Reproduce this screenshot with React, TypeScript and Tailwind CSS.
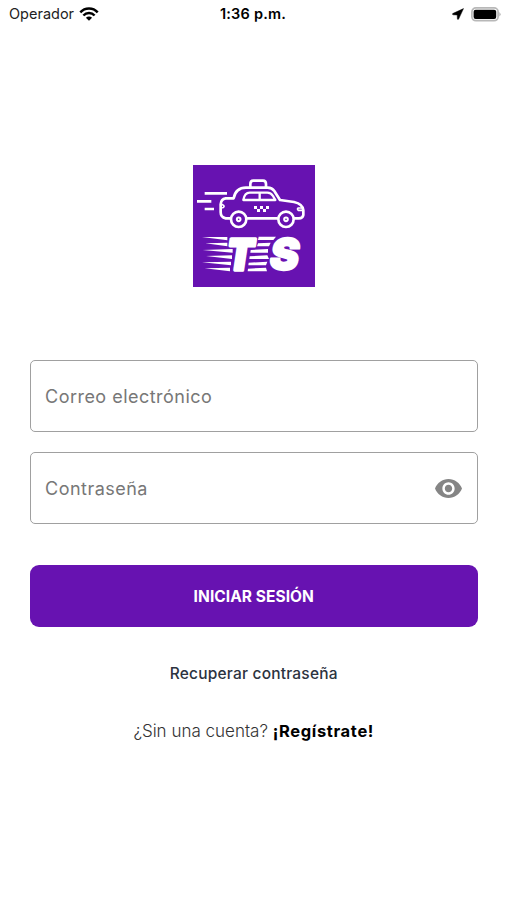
import type { ReactNode } from "react";

function WifiIcon() {
  return (
    <svg className="h-[14px] w-[20px]" viewBox="0 0 20 14" fill="none" stroke="#000" strokeWidth="2.5">
      <path d="M1.3 5.4C6 .3 14 .3 18.7 5.4" />
      <path d="M4.4 8.5C7.5 5.2 12.5 5.2 15.6 8.5" />
      <path d="M10 13.8 6.9 10.7C8.6 9.1 11.4 9.1 13.1 10.7Z" fill="#000" stroke="none" />
    </svg>
  );
}

function StatusBar() {
  return (
    <header className="grid h-7 grid-cols-3 items-center pl-[9px] pr-[6px] text-black">
      <div className="flex items-center gap-[5px]">
        <span className="text-[14.5px] leading-7 text-[#222]">Operador</span>
        <WifiIcon />
      </div>
      <span className="pr-[4px] text-center text-[14.5px] font-semibold leading-7 tracking-[0.2px]">1:36 p.m.</span>
      <div className="flex items-center justify-end gap-[7px]">
        <svg className="h-3 w-3" viewBox="0 0 12 12">
          <path d="M11.5.6.7 5.6Q.2 6.6 1 6.8L5.2 6.9 5.4 11Q5.8 12 6.6 11.1Z" fill="#000" stroke="#000" strokeWidth=".5" />
        </svg>
        <svg className="h-[15px] w-[30px]" viewBox="0 0 30 15">
          <rect x=".9" y=".9" width="26.2" height="12.8" rx="4" fill="#fff" stroke="#b8b8b8" strokeWidth="1.7" />
          <rect x="2.6" y="2.7" width="22.6" height="9.2" rx="2" fill="#000" />
          <path d="M28.3 5Q31 7.3 28.3 9.6Z" fill="#b8b8b8" />
        </svg>
      </div>
    </header>
  );
}

function Logo() {
  return (
    <svg className="h-[122px] w-[122px] bg-[#6712b1]" viewBox="15 15 366 366" fill="none" stroke="#fff">
      {/* speed lines */}
      <path d="M50 100H117M27 124H70M50 147H78" strokeWidth="8" />
      {/* car */}
      <g strokeWidth="8" strokeLinejoin="round" strokeLinecap="round">
        <path d="M187 80V72Q187 62 196 62H225Q234 62 234 72V80" />
        <path d="M127 175H113Q98 172 98 157V133Q99 117 113 115H137Q143 83 174 83H239Q252 83 259 93L276 120L318 126Q345 132 346 151V165Q344 175 333 175H320M179 175H267" />
        <path d="M166 120Q170 98 185 98H238Q249 98 255 108L262 120ZM215 98V120" strokeWidth="7" />
        <path d="M99 134H104Q109 136 108 140T99 144M343 144H331Q326 147 331 151H344" strokeWidth="5" />
        <circle cx="152" cy="178" r="23" />
        <circle cx="294" cy="178" r="23" />
        <circle cx="152" cy="178" r="5.5" strokeWidth="6" />
        <circle cx="294" cy="178" r="5.5" strokeWidth="6" />
      </g>
      <path
        d="M198 138h9v9h-9zM216 138h9v9h-9zM234 138h9v9h-9zM207 147h9v9h-9zM225 147h9v9h-9z"
        fill="#fff"
        stroke="none"
      />
      {/* trails behind the letters */}
      <path
        d="M42 231 118 231V241ZM52 250 118 248V259ZM44 270 134 267V278ZM54 288 132 286V297ZM42 307 129 305V316ZM50 325 126 323V334Z"
        fill="#fff"
        stroke="none"
      />
      <path
        d="M212 230H264L256 240H210ZM210 250 248 248 243 259H207ZM188 270 240 267V278H187ZM185 289 238 286 243 297H184ZM182 308 238 305 234 316H181ZM180 326 234 323 237 334H179Z"
        fill="#fff"
        stroke="none"
      />
      <g className="font-['Inter',sans-serif] font-black italic" strokeLinejoin="round" fill="#fff">
        <text x="118" y="329" fontSize="126" strokeWidth="11" textLength="79" lengthAdjust="spacingAndGlyphs">
          T
        </text>
        <text x="246" y="330" fontSize="132" strokeWidth="7" textLength="87" lengthAdjust="spacingAndGlyphs">
          S
        </text>
      </g>
    </svg>
  );
}

function Field({ label, children }: { label: string; children?: ReactNode }) {
  return (
    <div className="flex h-[72px] items-center justify-between rounded-[5px] border border-[#a0a0a0] pl-[14px] pr-[15px]">
      <span className="text-[18px] tracking-[0.48px] text-[#777]">{label}</span>
      {children}
    </div>
  );
}

export default function App() {
  return (
    <div className="flex h-[900px] w-[507px] flex-col bg-white font-['Inter',sans-serif]">
      <StatusBar />
      <main className="flex flex-col pl-[30px] pr-[29.5px]">
        <div className="mt-[137px] flex justify-center">
          <Logo />
        </div>
        <div className="mt-[73px] flex flex-col gap-5">
          <Field label="Correo electrónico" />
          <Field label="Contraseña">
            <svg className="h-[19px] w-[27px]" viewBox="1 4.5 22 15" preserveAspectRatio="none" fill="#858585">
              <path d="M12 4.5C7 4.5 2.73 7.61 1 12c1.73 4.39 6 7.5 11 7.5s9.27-3.11 11-7.5c-1.73-4.39-6-7.5-11-7.5zM12 17c-2.76 0-5-2.24-5-5s2.24-5 5-5 5 2.24 5 5-2.24 5-5 5zm0-8c-1.66 0-3 1.34-3 3s1.34 3 3 3 3-1.34 3-3-1.34-3-3-3z" />
            </svg>
          </Field>
        </div>
        <button className="mt-[41px] h-[62px] rounded-[9px] bg-[#6712b1] pt-[2px] text-[15.5px] font-bold tracking-[0.05px] text-white">
          INICIAR SESIÓN
        </button>
        <a className="mt-[35px] text-center text-[15.5px] font-medium leading-6 tracking-[0.2px] text-[#2c3340]">
          Recuperar contraseña
        </a>
        <p className="mt-[33px] text-center text-[17px] font-light leading-6 text-[#333]">
          ¿Sin una cuenta? <b className="text-[16.5px] font-bold tracking-[0.65px] text-black">¡Regístrate!</b>
        </p>
      </main>
    </div>
  );
}
